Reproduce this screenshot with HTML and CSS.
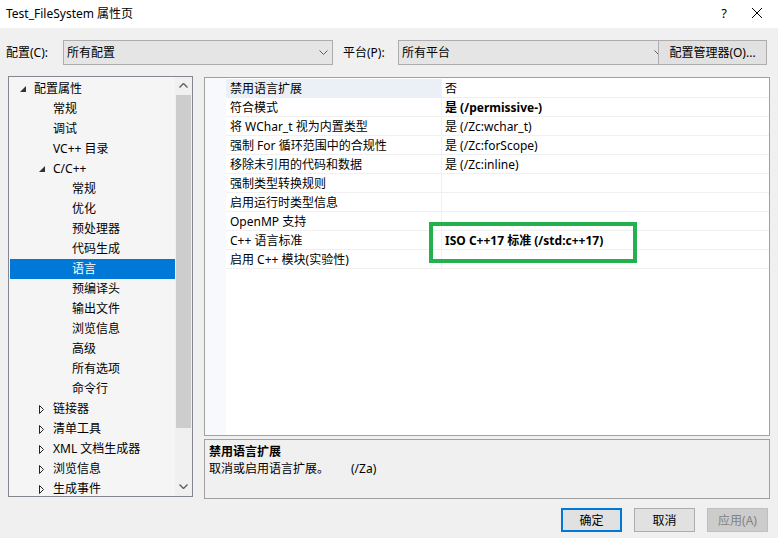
FILE: index.html
```html
<!DOCTYPE html>
<html lang="zh-CN">
<head>
    <meta charset="UTF-8">
    <title>Test_FileSystem 属性页</title>
    <link rel="stylesheet" href="styles.css">
</head>
<body>
    <div class="titlebar">
        <span class="title">Test_FileSystem 属性页</span>
        <span class="title-btns">
            <span class="help">?</span>
            <svg class="close" width="12" height="12" viewBox="0 0 12 12"><path d="M1 1 L11 11 M11 1 L1 11" stroke="#000" stroke-width="1" fill="none"/></svg>
        </span>
    </div>

    <div class="config-row">
        <span class="cfg-label">配置(C):</span>
        <div class="combo combo-config">
            <span>所有配置</span>
            <svg class="chev" width="9" height="5" viewBox="0 0 9 5"><path d="M0.5 0.5 L4.5 4.5 L8.5 0.5" stroke="#606060" fill="none"/></svg>
        </div>
        <span class="cfg-label plat-label">平台(P):</span>
        <div class="combo combo-platform">
            <span>所有平台</span>
            <svg class="chev" width="9" height="5" viewBox="0 0 9 5"><path d="M0.5 0.5 L4.5 4.5 L8.5 0.5" stroke="#606060" fill="none"/></svg>
        </div>
        <button class="btn btn-manager">配置管理器(O)...</button>
    </div>

    <div class="main">
        <div class="tree">
            <div class="tree-list">
                <div class="node lv0"><span class="exp"><svg width="6" height="6" viewBox="0 0 6 6"><polygon points="6,0 6,6 0,6" fill="#333"/></svg></span>配置属性</div>
                <div class="node lv1"><span class="exp"></span>常规</div>
                <div class="node lv1"><span class="exp"></span>调试</div>
                <div class="node lv1"><span class="exp"></span>VC++ 目录</div>
                <div class="node lv1"><span class="exp"><svg width="6" height="6" viewBox="0 0 6 6"><polygon points="6,0 6,6 0,6" fill="#333"/></svg></span>C/C++</div>
                <div class="node lv2"><span class="exp"></span>常规</div>
                <div class="node lv2"><span class="exp"></span>优化</div>
                <div class="node lv2"><span class="exp"></span>预处理器</div>
                <div class="node lv2"><span class="exp"></span>代码生成</div>
                <div class="node lv2 selected"><span class="exp"></span>语言</div>
                <div class="node lv2"><span class="exp"></span>预编译头</div>
                <div class="node lv2"><span class="exp"></span>输出文件</div>
                <div class="node lv2"><span class="exp"></span>浏览信息</div>
                <div class="node lv2"><span class="exp"></span>高级</div>
                <div class="node lv2"><span class="exp"></span>所有选项</div>
                <div class="node lv2"><span class="exp"></span>命令行</div>
                <div class="node lv1"><span class="exp"><svg width="6" height="9" viewBox="0 0 6 9"><polygon points="0.5,0.5 4.5,4.5 0.5,8.5" stroke="#222" fill="none"/></svg></span>链接器</div>
                <div class="node lv1"><span class="exp"><svg width="6" height="9" viewBox="0 0 6 9"><polygon points="0.5,0.5 4.5,4.5 0.5,8.5" stroke="#222" fill="none"/></svg></span>清单工具</div>
                <div class="node lv1"><span class="exp"><svg width="6" height="9" viewBox="0 0 6 9"><polygon points="0.5,0.5 4.5,4.5 0.5,8.5" stroke="#222" fill="none"/></svg></span>XML 文档生成器</div>
                <div class="node lv1"><span class="exp"><svg width="6" height="9" viewBox="0 0 6 9"><polygon points="0.5,0.5 4.5,4.5 0.5,8.5" stroke="#222" fill="none"/></svg></span>浏览信息</div>
                <div class="node lv1"><span class="exp"><svg width="6" height="9" viewBox="0 0 6 9"><polygon points="0.5,0.5 4.5,4.5 0.5,8.5" stroke="#222" fill="none"/></svg></span>生成事件</div>
            </div>
            <div class="vscroll">
                <div class="arrow"><svg width="9" height="5" viewBox="0 0 9 5"><path d="M0.5 4.5 L4.5 0.5 L8.5 4.5" stroke="#606060" stroke-width="1.4" fill="none"/></svg></div>
                <div class="thumb"></div>
                <div class="arrow arrow-down"><svg width="9" height="5" viewBox="0 0 9 5"><path d="M0.5 0.5 L4.5 4.5 L8.5 0.5" stroke="#606060" stroke-width="1.4" fill="none"/></svg></div>
            </div>
        </div>

        <div class="right">
            <div class="grid">
                <div class="gutter"></div>
                <div class="grid-body">
                    <div class="prop current"><div class="name">禁用语言扩展</div><div class="value">否</div></div>
                    <div class="prop"><div class="name">符合模式</div><div class="value bold">是 (/permissive-)</div></div>
                    <div class="prop"><div class="name">将 WChar_t 视为内置类型</div><div class="value">是 (/Zc:wchar_t)</div></div>
                    <div class="prop"><div class="name">强制 For 循环范围中的合规性</div><div class="value">是 (/Zc:forScope)</div></div>
                    <div class="prop"><div class="name">移除未引用的代码和数据</div><div class="value">是 (/Zc:inline)</div></div>
                    <div class="prop"><div class="name">强制类型转换规则</div><div class="value"></div></div>
                    <div class="prop"><div class="name">启用运行时类型信息</div><div class="value"></div></div>
                    <div class="prop"><div class="name">OpenMP 支持</div><div class="value"></div></div>
                    <div class="prop"><div class="name">C++ 语言标准</div><div class="value bold">ISO C++17 标准 (/std:c++17)</div></div>
                    <div class="prop"><div class="name">启用 C++ 模块(实验性)</div><div class="value"></div></div>
                </div>
                <div class="mark"></div>
            </div>
            <div class="desc">
                <div class="desc-title">禁用语言扩展</div>
                <div class="desc-text">取消或启用语言扩展。<span class="desc-switch">(/Za)</span></div>
            </div>
        </div>
    </div>

    <div class="footer">
        <button class="btn btn-ok">确定</button>
        <button class="btn">取消</button>
        <button class="btn btn-disabled">应用(A)</button>
    </div>
</body>
</html>
```

FILE: styles.css
```css
body {
    margin: 0;
    width: 778px;
    height: 538px;
    overflow: hidden;
    background-color: #f0f0f0;
    font-family: "Noto Sans", "Noto Sans CJK SC", sans-serif;
    font-size: 12px;
    color: #000;
}
.titlebar {
    height: 28px;
    background: white;
    display: flex;
    align-items: center;
    justify-content: space-between;
    padding-left: 6px;
}
.title {
    line-height: 16px;
    margin-top: -1px;
}
.title-btns {
    display: flex;
    align-items: center;
    margin-top: -3px;
}
.help {
    font-size: 13px;
    width: 46px;
    text-align: center;
}
.close {
    margin-right: 15px;
    margin-left: 4px;
}
.config-row {
    height: 48px;
    display: flex;
    align-items: center;
    padding: 0 10px 0 6px;
    box-sizing: border-box;
}
.cfg-label {
    width: 57px;
    flex: none;
}
.plat-label {
    width: 55px;
    margin-left: 10px;
}
.combo {
    height: 25px;
    box-sizing: border-box;
    border: 1px solid #adadad;
    background: #e5e5e5;
    display: flex;
    align-items: center;
    justify-content: space-between;
    padding: 0 4px 0 3px;
    flex: none;
}
.combo-config {
    width: 270px;
}
.combo-platform {
    width: 266px;
    padding-right: 0;
}
.btn {
    font-family: inherit;
    font-size: 12px;
    color: #000;
    background: #e1e1e1;
    border: 1px solid #adadad;
    height: 24px;
    width: 61px;
    padding: 0;
    box-sizing: border-box;
}
.btn-manager {
    width: 109px;
    height: 25px;
    margin-left: -6px;
    position: relative;
}
.main {
    display: flex;
    padding: 0 8px;
    gap: 11px;
}
.tree {
    width: 185px;
    height: 421px;
    box-sizing: border-box;
    border: 1px solid #828790;
    background: #f5f5f5;
    display: flex;
    overflow: hidden;
}
.tree-list {
    flex: 1;
    padding: 2px 0 0 1px;
    overflow: hidden;
}
.node {
    height: 20px;
    line-height: 20px;
    display: flex;
    align-items: center;
    white-space: nowrap;
}
.node.lv0 { padding-left: 5px; }
.node.lv1 { padding-left: 24px; }
.node.lv2 { padding-left: 43px; }
.node.selected {
    background: #0078d7;
    color: white;
}
.exp {
    width: 19px;
    flex: none;
    display: flex;
    align-items: center;
    padding-left: 5px;
    box-sizing: border-box;
}
.vscroll {
    width: 17px;
    flex: none;
    background: #f0f0f0;
    display: flex;
    flex-direction: column;
    align-items: center;
}
.arrow {
    height: 17px;
    display: flex;
    align-items: center;
    justify-content: center;
    flex: none;
}
.thumb {
    width: 15px;
    height: 333px;
    background: #cdcdcd;
    margin-top: 1px;
}
.arrow-down {
    margin-top: auto;
    margin-bottom: 1px;
}
.right {
    width: 566px;
    display: flex;
    flex-direction: column;
    gap: 3px;
    padding-top: 1px;
}
.grid {
    height: 359px;
    box-sizing: border-box;
    border: 1px solid #a0a0a0;
    background: white;
    display: flex;
    position: relative;
}
.gutter {
    width: 21px;
    background: #f8f9fc;
    flex: none;
}
.grid-body {
    flex: 1;
    padding-top: 1px;
}
.prop {
    display: grid;
    grid-template-columns: 216px 1fr;
    height: 19px;
    box-sizing: border-box;
    border-bottom: 1px solid #f0f0f0;
    line-height: 19px;
    white-space: nowrap;
}
.prop .name {
    padding-left: 4px;
    border-right: 1px solid #f0f0f0;
}
.prop .value {
    padding-left: 3px;
}
.prop.current .name {
    background: #ebf0f7;
}
.bold {
    font-weight: bold;
}
.mark {
    position: absolute;
    left: 224px;
    top: 144px;
    width: 208px;
    height: 41px;
    box-sizing: border-box;
    border: 4px solid #22b14c;
}
.desc {
    height: 60px;
    box-sizing: border-box;
    border: 1px solid #a0a0a0;
    background: #f0f0f0;
    padding: 3px 5px 0 4px;
    line-height: 17px;
}
.desc-title {
    font-weight: bold;
}
.desc-switch {
    margin-left: 22px;
}
.footer {
    display: flex;
    justify-content: flex-end;
    gap: 12px;
    padding: 9px 10px 0 0;
}
.btn-ok {
    border: 2px solid #0078d7;
}
.btn-disabled {
    background: #cccccc;
    border-color: #bfbfbf;
    color: #838383;
}
```
